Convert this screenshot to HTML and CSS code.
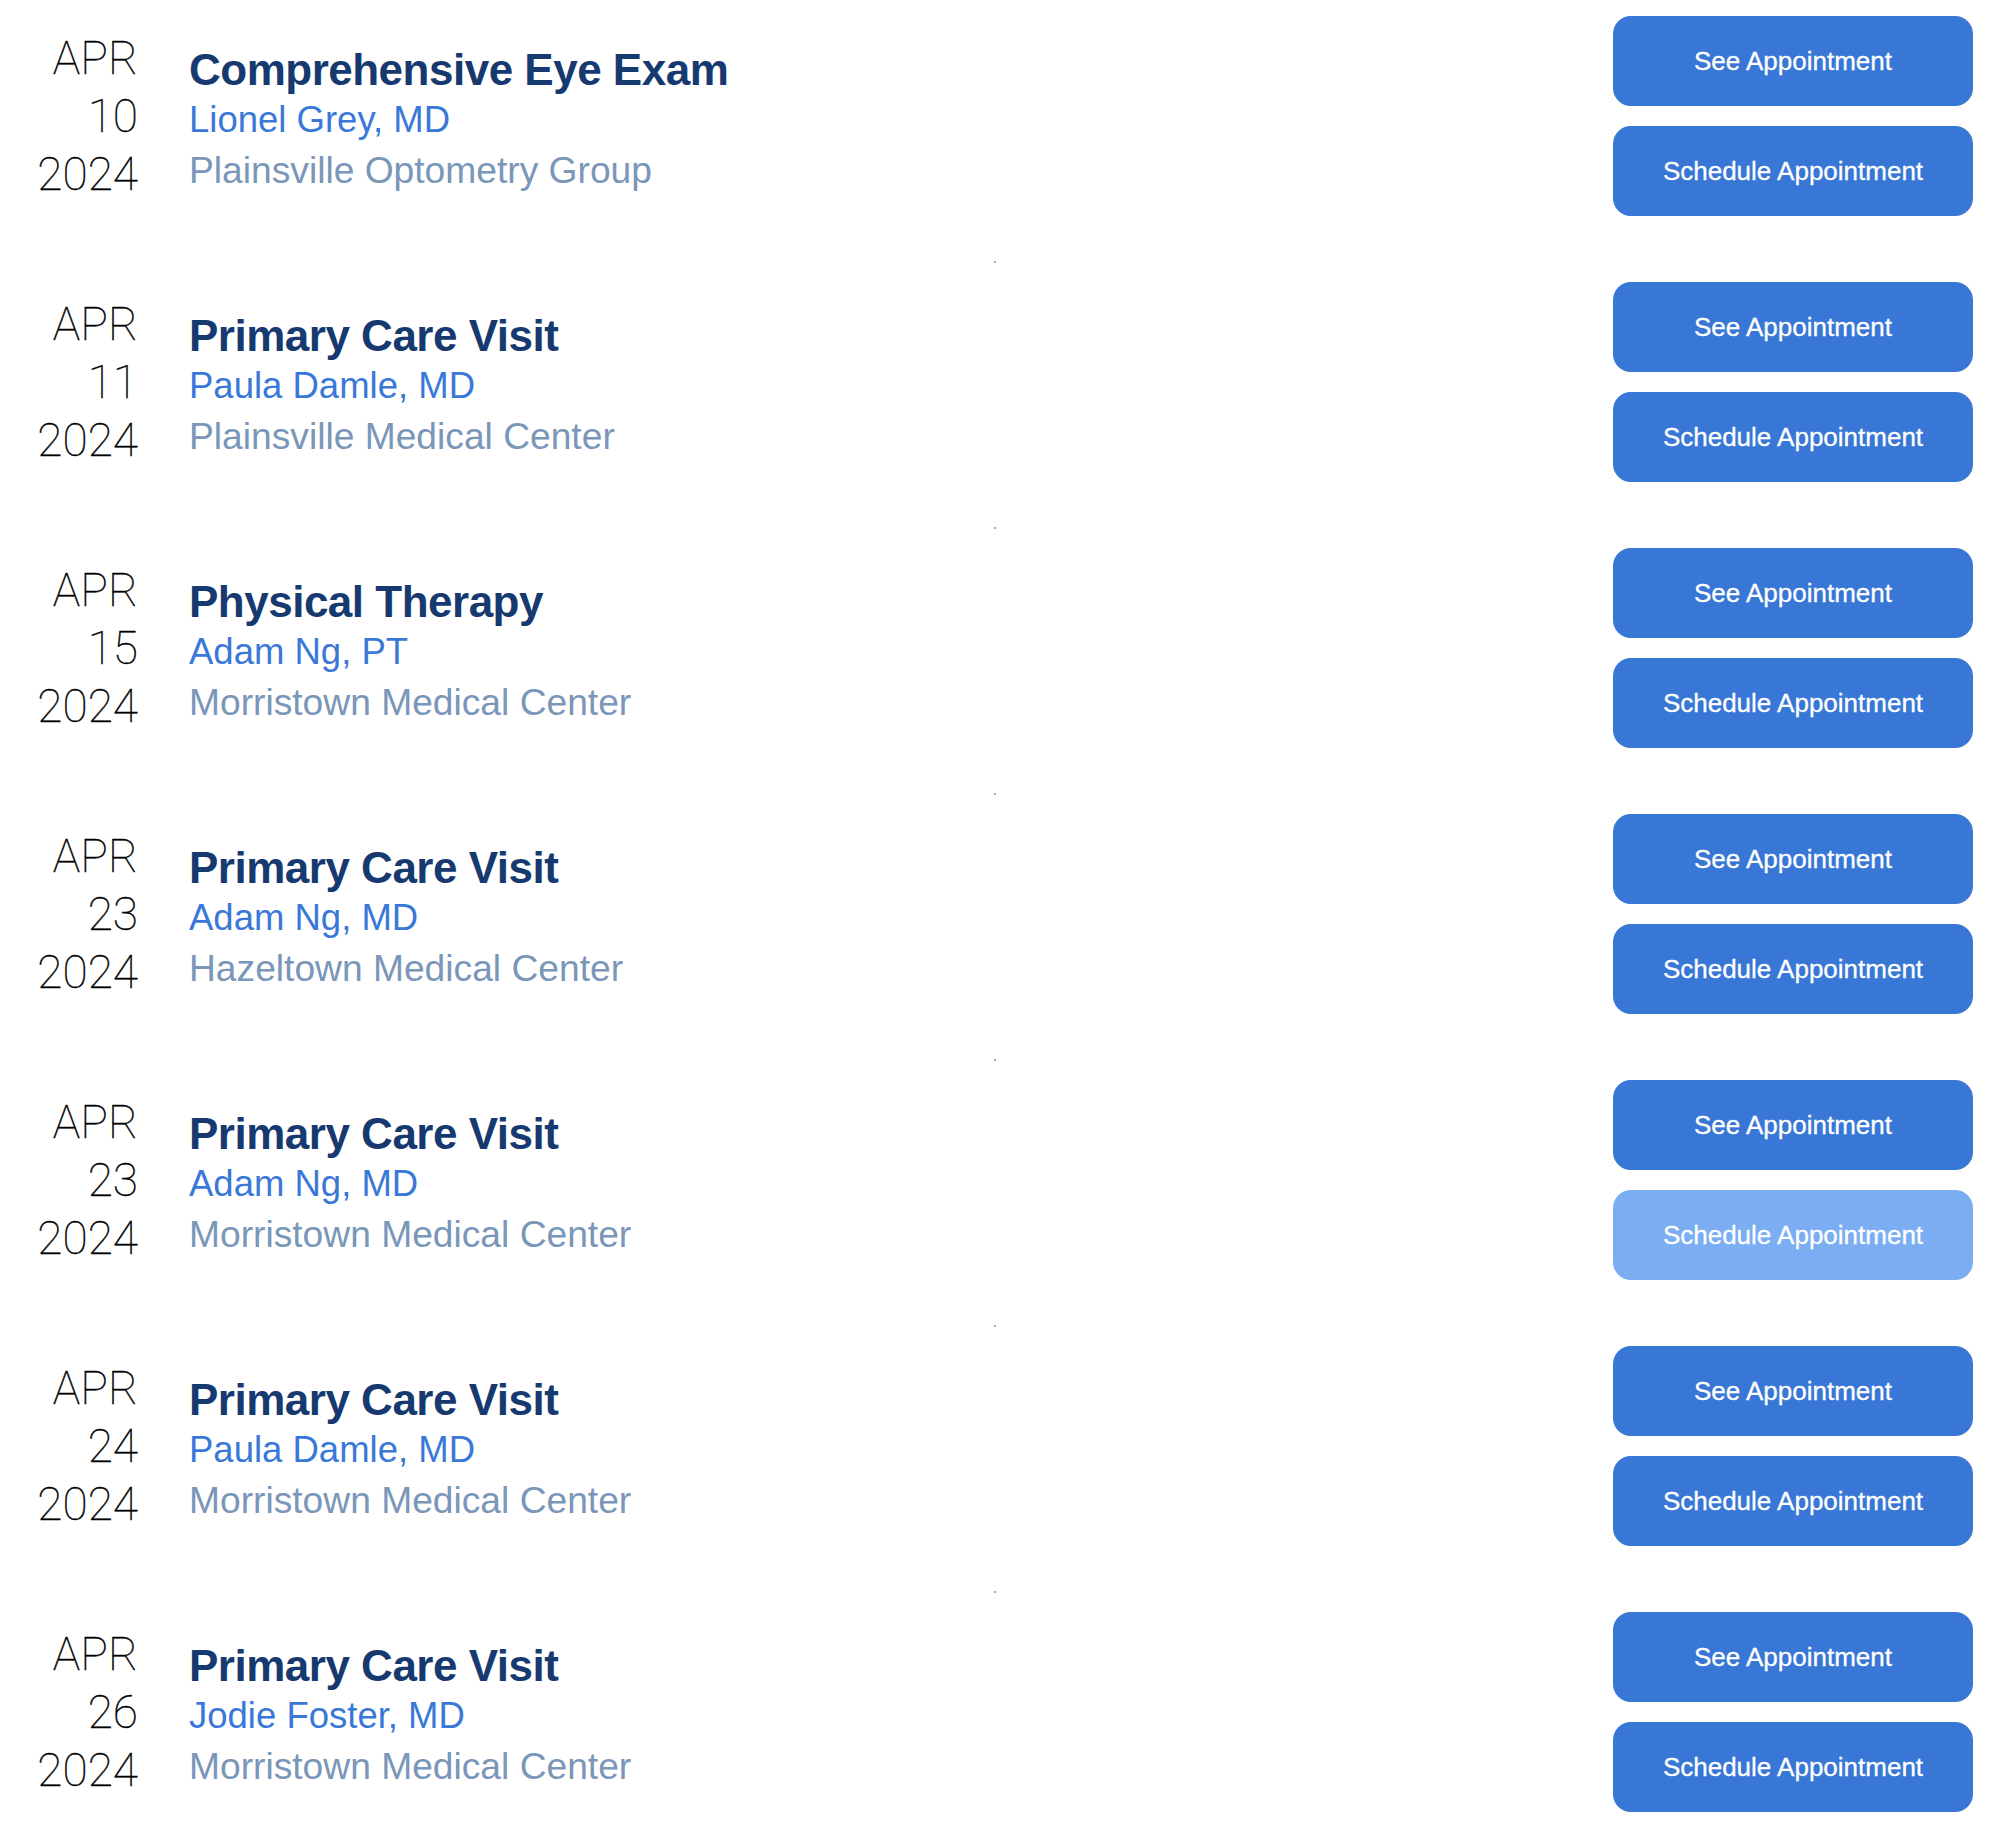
FILE: index.html
```html
<!DOCTYPE html>
<html lang="en">
<head>
<meta charset="utf-8">
<title>Appointments</title>
<link rel="stylesheet" href="styles.css">
</head>
<body>
<main class="list">
  <section class="row">
    <div class="date"><div>APR</div><div>10</div><div>2024</div></div>
    <div class="info">
      <div class="title">Comprehensive Eye Exam</div>
      <div class="doctor">Lionel Grey, MD</div>
      <div class="org">Plainsville Optometry Group</div>
    </div>
    <div class="actions">
      <button class="btn">See Appointment</button>
      <button class="btn">Schedule Appointment</button>
    </div>
  </section>
  <div class="sep"><span class="dot"></span></div>
  <section class="row">
    <div class="date"><div>APR</div><div>11</div><div>2024</div></div>
    <div class="info">
      <div class="title">Primary Care Visit</div>
      <div class="doctor">Paula Damle, MD</div>
      <div class="org">Plainsville Medical Center</div>
    </div>
    <div class="actions">
      <button class="btn">See Appointment</button>
      <button class="btn">Schedule Appointment</button>
    </div>
  </section>
  <div class="sep"><span class="dot"></span></div>
  <section class="row">
    <div class="date"><div>APR</div><div>15</div><div>2024</div></div>
    <div class="info">
      <div class="title">Physical Therapy</div>
      <div class="doctor">Adam Ng, PT</div>
      <div class="org">Morristown Medical Center</div>
    </div>
    <div class="actions">
      <button class="btn">See Appointment</button>
      <button class="btn">Schedule Appointment</button>
    </div>
  </section>
  <div class="sep"><span class="dot"></span></div>
  <section class="row">
    <div class="date"><div>APR</div><div>23</div><div>2024</div></div>
    <div class="info">
      <div class="title">Primary Care Visit</div>
      <div class="doctor">Adam Ng, MD</div>
      <div class="org">Hazeltown Medical Center</div>
    </div>
    <div class="actions">
      <button class="btn">See Appointment</button>
      <button class="btn">Schedule Appointment</button>
    </div>
  </section>
  <div class="sep"><span class="dot"></span></div>
  <section class="row">
    <div class="date"><div>APR</div><div>23</div><div>2024</div></div>
    <div class="info">
      <div class="title">Primary Care Visit</div>
      <div class="doctor">Adam Ng, MD</div>
      <div class="org">Morristown Medical Center</div>
    </div>
    <div class="actions">
      <button class="btn">See Appointment</button>
      <button class="btn btn-disabled" disabled>Schedule Appointment</button>
    </div>
  </section>
  <div class="sep"><span class="dot"></span></div>
  <section class="row">
    <div class="date"><div>APR</div><div>24</div><div>2024</div></div>
    <div class="info">
      <div class="title">Primary Care Visit</div>
      <div class="doctor">Paula Damle, MD</div>
      <div class="org">Morristown Medical Center</div>
    </div>
    <div class="actions">
      <button class="btn">See Appointment</button>
      <button class="btn">Schedule Appointment</button>
    </div>
  </section>
  <div class="sep"><span class="dot"></span></div>
  <section class="row">
    <div class="date"><div>APR</div><div>26</div><div>2024</div></div>
    <div class="info">
      <div class="title">Primary Care Visit</div>
      <div class="doctor">Jodie Foster, MD</div>
      <div class="org">Morristown Medical Center</div>
    </div>
    <div class="actions">
      <button class="btn">See Appointment</button>
      <button class="btn">Schedule Appointment</button>
    </div>
  </section>
</main>
</body>
</html>
```

FILE: styles.css
```css
* { box-sizing: border-box; }

html, body {
  margin: 0;
  padding: 0;
  background: #ffffff;
}

body {
  font-family: "Liberation Sans", Arial, sans-serif;
}

.list {
  display: flex;
  flex-direction: column;
  padding: 16px 25px 0 0;
}

.row {
  display: flex;
  align-items: center;
  height: 200px;
}

.date {
  width: 138px;
  flex: none;
  text-align: right;
  font-family: "Roboto", "Liberation Sans", sans-serif;
  font-weight: 100;
  font-size: 46px;
  line-height: 58px;
  color: #000000;
  -webkit-text-stroke: 0.35px #000000;
}

.info {
  margin-left: 51px;
  padding-top: 7px;
  flex: 1 1 auto;
}

.title {
  font-weight: 700;
  font-size: 44px;
  line-height: 51px;
  letter-spacing: -0.5px;
  color: #163a70;
}

.doctor {
  font-size: 36.5px;
  line-height: 50px;
  color: #3a78d8;
}

.org {
  font-size: 37.2px;
  line-height: 50px;
  color: #7a96b8;
}

.actions {
  flex: none;
  width: 360px;
  display: flex;
  flex-direction: column;
  gap: 20px;
}

.btn {
  height: 90px;
  border: none;
  border-radius: 18px;
  background: #3877d5;
  color: #ffffff;
  font-family: "Liberation Sans", Arial, sans-serif;
  font-size: 26px;
  -webkit-text-stroke: 0.3px #ffffff;
  cursor: pointer;
}

.btn-disabled {
  background: #7badf2;
  cursor: default;
}

.sep {
  height: 66px;
  padding: 45px 0 0 994px;
}

.dot {
  display: block;
  width: 2px;
  height: 2px;
  background: #a8a8a8;
}
```
